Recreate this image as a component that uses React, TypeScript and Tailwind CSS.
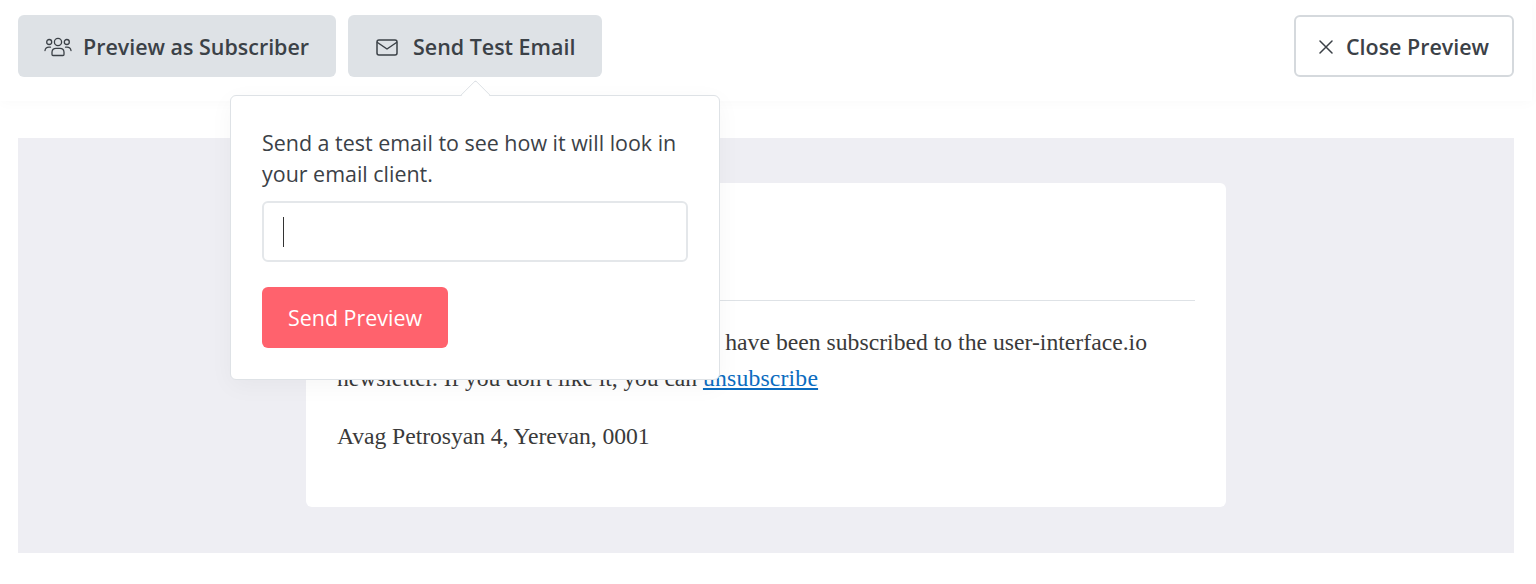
import React from "react";

const ui = { fontFamily: '"Open Sans", sans-serif' };

function GroupIcon() {
  return (
    <svg width="28" height="20" viewBox="0 0 28 20" fill="none" stroke="#3b4147" strokeWidth="1.3" strokeLinecap="round" strokeLinejoin="round">
      <circle cx="14" cy="5" r="3.6" />
      <circle cx="5.2" cy="5" r="2.5" />
      <circle cx="22.8" cy="5" r="2.5" />
      <path d="M8 17.5v-2.5a4 4 0 0 1 4-3.6h4a4 4 0 0 1 4 3.6v2.5a1 1 0 0 1-1 1H9a1 1 0 0 1-1-1z" />
      <path d="M1 13.5c.3-2 2-3.3 4-3.3h1.5" />
      <path d="M27 13.5c-.3-2-2-3.3-4-3.3h-1.5" />
    </svg>
  );
}

function MailIcon() {
  return (
    <svg width="22" height="17" viewBox="0 0 22 17" fill="none" stroke="#3b4147" strokeWidth="1.5" strokeLinejoin="round" strokeLinecap="round">
      <rect x="1" y="1" width="20" height="15" rx="2" />
      <path d="M1.5 3.5 11 10l9.5-6.5" />
    </svg>
  );
}

function CloseIcon() {
  return (
    <svg width="14" height="14" viewBox="0 0 14 14" fill="none" stroke="#3b4147" strokeWidth="1.5" strokeLinecap="round">
      <path d="M1 1l12 12M13 1 1 13" />
    </svg>
  );
}

export default function App() {
  return (
    <div className="relative h-[584px] w-[1536px] overflow-hidden bg-white" style={ui}>
      <div className="w-[1532px]">
        <header className="flex h-[101px] items-start justify-between bg-white px-[18px] pt-[15px] shadow-[0_2px_12px_rgba(0,0,0,0.025)]">
          <div className="flex gap-[12px]">
            <button className="flex h-[62px] w-[318px] items-center gap-[11px] rounded-[6px] bg-[#dee2e6] pl-[26px] pt-[2px] text-[21.44px] font-semibold text-[#3b4147]">
              <GroupIcon />
              Preview as Subscriber
            </button>
            <button className="flex h-[62px] w-[254px] items-center gap-[15px] rounded-[6px] bg-[#dee2e6] pl-[28px] pt-[2px] text-[21.44px] font-semibold text-[#3b4147]">
              <MailIcon />
              Send Test Email
            </button>
          </div>
          <button className="flex h-[62px] w-[220px] items-center gap-[13px] rounded-[6px] border-2 border-[#d5d9dd] bg-white pl-[23px] pt-[2px] text-[21.44px] font-semibold text-[#3b4147]">
            <CloseIcon />
            Close Preview
          </button>
        </header>

        <main className="mx-[18px] mt-[37px] h-[415px] bg-[#eeeef3] pt-[45px]">
          <div className="mx-auto h-[324px] w-[920px] rounded-[6px] bg-white px-[31px] pt-[117px]" style={{ fontFamily: '"Liberation Serif", serif' }}>
            <div className="border-t border-[#dee2e6] pt-[23px] text-[23.7px] leading-[36px] text-[#3a3a3a]">
              <p>
                <span className="tracking-[-0.15px]">You are receiving this email because you</span> have been subscribed to the user-interface.io{" "}
                <span className="tracking-[-0.1px]">newsletter. If you don't like it, you can</span>{" "}
                <a href="#" className="tracking-[0.18px] text-[#0b6cc0] underline">unsubscribe</a>
              </p>
              <p className="mt-[22px] tracking-[-0.07px]">Avag Petrosyan 4, Yerevan, 0001</p>
            </div>
          </div>
        </main>
      </div>

      <div className="absolute left-[230px] top-[95px] h-[285px] w-[490px] rounded-[6px] border border-[#dee2e6] bg-white px-[31px] pt-[31px] shadow-[0_6px_24px_rgba(0,0,0,0.04)]">
        <span className="absolute left-[233.5px] top-[-12.5px] h-[21px] w-[21px] rotate-45 rounded-tl-[3px] border-l border-t border-[#dee2e6] bg-white" />
        <p className="relative text-[21.44px] leading-[31px] text-[#3b4147]">
          Send a test email to see how it will look in your email client.
        </p>
        <div className="mt-[12px] flex h-[61px] w-[426px] items-center rounded-[6px] border-2 border-[#e4e7ea] pl-[19px]">
          <span className="h-[30px] w-[1px] bg-[#333]" />
        </div>
        <button className="mt-[25px] h-[61px] w-[186px] rounded-[6px] bg-[#ff626d] pt-[2px] text-[21.44px] text-white">
          Send Preview
        </button>
      </div>
    </div>
  );
}
